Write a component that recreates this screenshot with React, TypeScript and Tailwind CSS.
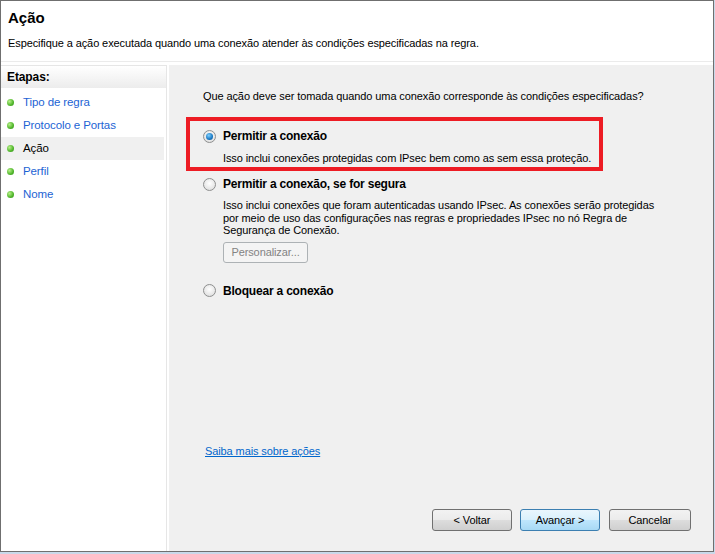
import React from 'react';

// Windows Firewall rule wizard – "Ação" step

const steps = ['Tipo de regra', 'Protocolo e Portas', 'Ação', 'Perfil', 'Nome'];

function Bullet() {
  return (
    <span className="inline-block h-[7px] w-[7px] shrink-0 rounded-full bg-[radial-gradient(circle_at_35%_35%,#b8f08a,#4fb52a_60%,#2f8a18)]" />
  );
}

function Radio({ checked }: { checked?: boolean }) {
  return (
    <span className="flex h-[13px] w-[13px] shrink-0 items-center justify-center rounded-full border border-[#8e8f8f] bg-[radial-gradient(circle_at_50%_40%,#ffffff,#e4e4e4_70%,#cfcfcf)]">
      {checked && (
        <span className="h-[7px] w-[7px] rounded-full bg-[radial-gradient(circle_at_40%_35%,#7fd0ff,#1a78c2_60%,#0b4a8a)]" />
      )}
    </span>
  );
}

function WinButton({ children, focused, wide }: { children: React.ReactNode; focused?: boolean; wide?: boolean }) {
  return (
    <button
      className={
        'h-[22px] rounded-[3px] border text-[11px] text-black ' +
        (wide ? 'w-[82px] ' : 'w-[80px] ') +
        (focused
          ? 'border-[#3c7fb1] bg-[linear-gradient(#eaf6fd,#d9f0fc_50%,#bee6fd_51%,#a7d9f5)]'
          : 'border-[#707070] bg-[linear-gradient(#f2f2f2,#ebebeb_50%,#dddddd_51%,#cfcfcf)]')
      }
    >
      {children}
    </button>
  );
}

export default function App() {
  return (
    <div
      className="h-[554px] w-[715px] bg-[#c9d9ea] tracking-[-0.1px]"
      style={{ fontFamily: '"Liberation Sans", Arial, sans-serif' }}
    >
      <div className="flex h-[552px] w-[714px] flex-col border border-[#6f6f6f] bg-white">
        {/* header */}
        <div className="h-[61px] shrink-0 border-b border-[#ebebeb] px-[7px] pt-[8px]">
          <h1 className="text-[15px] font-bold leading-[18px] tracking-normal text-black">Ação</h1>
          <p className="mt-[9px] text-[11px] leading-[14px] text-black">
            Especifique a ação executada quando uma conexão atender às condições especificadas na regra.
          </p>
        </div>

        <div className="mt-[3px] flex min-h-0 flex-1">
          {/* steps */}
          <div className="w-[166px] shrink-0 border-r border-t border-[#e6e6e6]">
            <div className="flex h-[22px] items-center bg-[linear-gradient(#ffffff,#ececec)] px-[6px] text-[12px] font-bold text-black">
              Etapas:
            </div>
            <ul className="mt-[3px] pr-[2px]">
              {steps.map((s) => (
                <li
                  key={s}
                  className={
                    'flex h-[23px] items-center gap-[9px] pl-[6px] text-[11.5px] ' +
                    (s === 'Ação' ? 'bg-[#f0f0f0] text-black' : 'text-[#1c63d4]')
                  }
                >
                  <Bullet />
                  {s}
                </li>
              ))}
            </ul>
          </div>

          {/* content */}
          <div className="relative ml-[2px] flex flex-1 flex-col bg-[#f0f0f0] pl-[34px] pr-[20px] pt-[24px] text-[11px] text-black">
            <p className="leading-[14px]">
              Que ação deve ser tomada quando uma conexão corresponde às condições especificadas?
            </p>

            <div className="mt-[24px] flex items-center gap-[7px]">
              <Radio checked />
              <span className="text-[12px] font-bold tracking-[-0.2px]">Permitir a conexão</span>
            </div>
            <p className="ml-[20px] mt-[6px] leading-[14px]">
              Isso inclui conexões protegidas com IPsec bem como as sem essa proteção.
            </p>

            <div className="mt-[10px] flex items-center gap-[7px]">
              <Radio />
              <span className="text-[12px] font-bold tracking-[-0.2px]">Permitir a conexão, se for segura</span>
            </div>
            <p className="ml-[20px] mt-[6px] w-[435px] leading-[12.5px]">
              Isso inclui conexões que foram autenticadas usando IPsec. As conexões serão protegidas por meio de uso
              das configurações nas regras e propriedades IPsec no nó Regra de Segurança de Conexão.
            </p>
            <button className="ml-[20px] mt-[5px] h-[21px] w-[85px] rounded-[3px] border border-[#adb2b5] bg-[#f4f4f4] text-[11px] text-[#838383]">
              Personalizar...
            </button>

            <div className="mt-[19px] flex items-center gap-[7px]">
              <Radio />
              <span className="text-[12px] font-bold tracking-[-0.2px]">Bloquear a conexão</span>
            </div>

            <a href="#" className="mt-auto ml-[2px] text-[11px] text-[#0066cc] underline">
              Saiba mais sobre ações
            </a>

            <div className="mb-[20px] mt-[50px] flex justify-end pr-[2px]">
              <WinButton>&lt; Voltar</WinButton>
              <div className="ml-[8px]">
                <WinButton focused>Avançar &gt;</WinButton>
              </div>
              <div className="ml-[9px]">
                <WinButton wide>Cancelar</WinButton>
              </div>
            </div>

            {/* red highlight annotation */}
            <div className="pointer-events-none absolute left-[17px] top-[52px] h-[54px] w-[417px] border-[4px] border-[#ed1c24]" />
          </div>
        </div>
      </div>
    </div>
  );
}
